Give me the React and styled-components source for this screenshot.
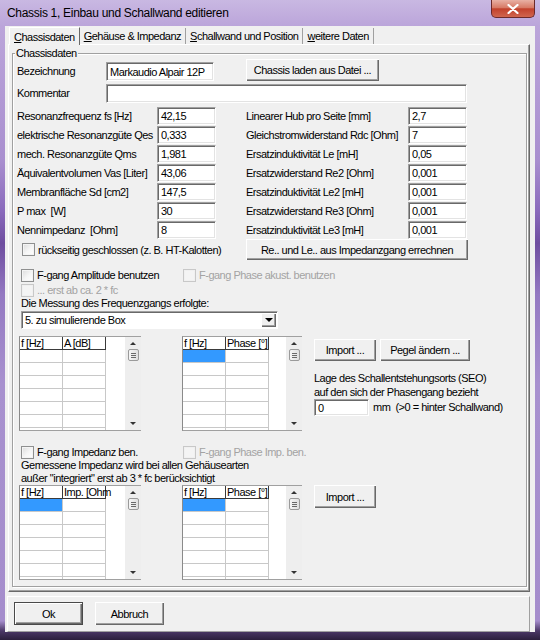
import React from 'react'
import styled, { createGlobalStyle, css } from 'styled-components'

const GlobalStyle = createGlobalStyle`
  html, body {
    margin: 0;
    padding: 0;
    background: #8f74bb;
  }
  body {
    font-family: "Liberation Sans", Arial, sans-serif;
    font-size: 11px;
    letter-spacing: -0.5px;
    color: #000;
  }
`

const Frame = styled.div`
  width: 540px;
  height: 640px;
  display: flex;
  flex-direction: column;
  box-sizing: border-box;
  padding-bottom: 8px;
  background: linear-gradient(
    180deg,
    #c9b8e2 0px,
    #bba5da 26px,
    #a98fcf 25%,
    #8a6abc 33%,
    #6f4ea0 38%,
    #9479c2 46%,
    #a891cf 60%,
    #a58dcc 97%,
    #4b3766 98.6%,
    #2b1f3c 100%
  );
`

const TitleBar = styled.div`
  height: 26px;
  display: flex;
  align-items: flex-start;
  justify-content: space-between;
  padding-left: 7px;
`

const Title = styled.span`
  font-size: 12px;
  line-height: 26px;
  letter-spacing: -0.3px;
`

const CloseButton = styled.div`
  width: 44px;
  height: 18px;
  margin-right: 5px;
  box-sizing: border-box;
  border: 1px solid #6b2a2a;
  border-top: none;
  border-radius: 0 0 5px 5px;
  background: linear-gradient(180deg, #e8b0a4 0%, #d77a66 45%, #c2412c 52%, #d0664e 100%);
  display: flex;
  align-items: center;
  justify-content: center;
`

const Client = styled.div`
  flex: 1;
  margin: 0 5px;
  background: #f0f0f0;
  display: flex;
  flex-direction: column;
`

const TabStrip = styled.div`
  height: 18px;
  display: flex;
  align-items: flex-end;
  padding-left: 4px;
`

const Tab = styled.div`
  height: 16px;
  padding: 0 4px;
  display: flex;
  align-items: center;
  border-right: 1px solid #a0a0a0;
  white-space: nowrap;
  ${p => p.$active && css`
    height: 18px;
    margin-bottom: -1px;
    position: relative;
    z-index: 1;
    background: #f0f0f0;
    border-top: 1px solid #fff;
    border-left: 1px solid #fff;
    border-right: 1px solid #696969;
    box-sizing: border-box;
  `}
`

const TabPanel = styled.div`
  height: 548px;
  margin: 0 5px 0 3px;
  box-sizing: border-box;
  padding: 8px 2px 3px 3px;
  border-top: 1px solid #fff;
  border-left: 1px solid #fff;
  border-right: 1px solid #696969;
  border-bottom: 1px solid #696969;
  box-shadow: inset -1px -1px 0 #a0a0a0;
`

const GroupBox = styled.div`
  position: relative;
  height: 534px;
  box-sizing: border-box;
  border: 1px solid #a0a0a0;
  box-shadow: inset 1px 1px 0 #fff, 1px 1px 0 #fff;
  padding-top: 5px;
`

const GroupTitle = styled.span`
  position: absolute;
  top: -7px;
  left: 2px;
  padding: 0 1px;
  background: #f0f0f0;
  line-height: 13px;
`

const Row = styled.div`
  display: flex;
  align-items: ${p => p.$align || 'center'};
  height: ${p => p.$h}px;
  margin-top: ${p => p.$top || 0}px;
  padding-left: ${p => p.$left || 0}px;
`

const Label = styled.span`
  width: ${p => p.$w}px;
  flex-shrink: 0;
  white-space: pre;
  line-height: ${p => p.$lh || 19}px;
  padding-left: ${p => p.$pl || 0}px;
`

const TextInput = styled.div`
  width: ${p => p.$w}px;
  height: ${p => p.$h}px;
  flex-shrink: 0;
  box-sizing: border-box;
  background: #fff;
  border-top: 1px solid #a0a0a0;
  border-left: 1px solid #a0a0a0;
  border-right: 1px solid #fff;
  border-bottom: 1px solid #fff;
  box-shadow: inset 1px 1px 0 #696969, inset -1px -1px 0 #e3e3e3;
  padding-left: 3px;
  display: flex;
  align-items: center;
  white-space: nowrap;
  overflow: hidden;
`

const Button = styled.div`
  width: ${p => p.$w}px;
  height: ${p => p.$h || 22}px;
  flex-shrink: 0;
  margin-left: ${p => p.$ml || 0}px;
  box-sizing: border-box;
  background: #f0f0f0;
  display: flex;
  align-items: center;
  justify-content: center;
  white-space: nowrap;
  box-shadow: inset 1px 1px 0 #fff, inset -1px -1px 0 #696969, inset -2px -2px 0 #a0a0a0;
  ${p => p.$default && css`
    border: 1px solid #4a4a4a;
  `}
`

const ParamGrid = styled.div`
  display: grid;
  grid-template-columns: 140px 59px 30px 162px 59px;
  grid-auto-rows: 19px;
  align-items: end;
  margin-top: 3px;
  padding-left: 4px;
`

const Check = styled.div`
  display: flex;
  align-items: center;
  gap: 3px;
  width: ${p => (p.$w ? `${p.$w}px` : 'auto')};
  flex-shrink: 0;
  white-space: nowrap;
  color: ${p => (p.$disabled ? '#a3a3a3' : '#000')};
`

const Box = styled.span`
  width: 13px;
  height: 13px;
  flex-shrink: 0;
  box-sizing: border-box;
  border: 1px solid ${p => (p.$disabled ? '#c8c8c8' : '#8e8f8f')};
  background: ${p => (p.$disabled ? '#f4f4f4' : 'linear-gradient(135deg, #dcdcdc 0%, #f6f6f6 55%, #fff 100%)')};
  box-shadow: inset 0 0 0 1px ${p => (p.$disabled ? '#f0f0f0' : '#f4f4f4')};
`

const TextLine = styled.div`
  line-height: ${p => p.$lh || 13}px;
  padding-left: ${p => p.$left || 0}px;
  margin-top: ${p => p.$top || 0}px;
  white-space: nowrap;
`

const Combo = styled.div`
  width: 257px;
  height: 18px;
  margin: 1px 0 0 8px;
  box-sizing: border-box;
  background: #fff;
  border-top: 1px solid #a0a0a0;
  border-left: 1px solid #a0a0a0;
  border-right: 1px solid #fff;
  border-bottom: 1px solid #fff;
  box-shadow: inset 1px 1px 0 #696969;
  display: flex;
  align-items: center;
  justify-content: space-between;
  padding: 0 1px 0 3px;
`

const DropButton = styled.div`
  width: 15px;
  height: 14px;
  box-sizing: border-box;
  background: #f0f0f0;
  box-shadow: inset 1px 1px 0 #fff, inset -1px -1px 0 #696969, inset -2px -2px 0 #a0a0a0;
  display: flex;
  align-items: center;
  justify-content: center;
`

const Arrow = styled.span`
  width: 0;
  height: 0;
  border-left: ${p => p.$s}px solid transparent;
  border-right: ${p => p.$s}px solid transparent;
  ${p => (p.$up
    ? css`border-bottom: ${p.$s}px solid ${p.$c || '#000'};`
    : css`border-top: ${p.$s}px solid ${p.$c || '#000'};`)}
`

const GridSection = styled.div`
  display: flex;
  align-items: flex-start;
  height: 95px;
  margin-top: ${p => p.$top || 0}px;
  padding-left: 6px;
`

const GridFrame = styled.div`
  width: ${p => p.$w}px;
  height: 95px;
  margin-right: ${p => p.$mr || 0}px;
  flex-shrink: 0;
  box-sizing: border-box;
  display: flex;
  border-left: 1px solid #8a8a8a;
  border-top: 1px solid #a0a0a0;
  border-bottom: 1px solid #a0a0a0;
  overflow: hidden;
`

const GridBody = styled.div`
  flex: 1;
  background: #fff;
  display: grid;
  grid-template-columns: 43px 43px;
  grid-auto-rows: 13px;
  align-content: start;
  overflow: hidden;
`

const HeadCell = styled.div`
  box-sizing: border-box;
  border-right: 1px solid #3a3a3a;
  border-bottom: 1px solid #3a3a3a;
  padding-left: 1px;
  line-height: 13px;
  white-space: nowrap;
`

const Cell = styled.div`
  box-sizing: border-box;
  border-right: 1px solid #c8c8c8;
  border-bottom: 1px solid #c8c8c8;
  background: ${p => (p.$selected ? '#3399ff' : '#fff')};
`

const ScrollBar = styled.div`
  width: 16px;
  flex-shrink: 0;
  background: #eeeeee;
  display: flex;
  flex-direction: column;
  align-items: center;
  padding: 5px 0 5px;
  box-sizing: border-box;
`

const Thumb = styled.div`
  width: 11px;
  height: 12px;
  margin-top: 4px;
  box-sizing: border-box;
  border: 1px solid #9a9a9a;
  border-radius: 2px;
  background: linear-gradient(90deg, #f6f6f6, #e0e0e0);
  display: flex;
  flex-direction: column;
  justify-content: center;
  gap: 1px;
  padding: 0 2px;
`

const Grip = styled.span`
  height: 1px;
  background: #6a6a6a;
`

const Filler = styled.div`
  flex: 1;
`

const SideColumn = styled.div`
  display: flex;
  flex-direction: column;
  padding-top: ${p => (p.$top === undefined ? 3 : p.$top)}px;
`

const ButtonRow = styled.div`
  display: flex;
`

const BottomPanel = styled.div`
  height: 36px;
  margin: 4px 5px 0 2px;
  box-sizing: border-box;
  border-top: 1px solid #fff;
  border-left: 1px solid #fff;
  border-right: 1px solid #a0a0a0;
  border-bottom: 1px solid #a0a0a0;
  display: flex;
  align-items: flex-start;
  padding: 5px 0 0 6px;
  gap: 12px;
`

const rows = 7

const DataGrid = ({ w, mr, heads, selected }) => (
  <GridFrame $w={w} $mr={mr}>
    <GridBody>
      <HeadCell>{heads[0]}</HeadCell>
      <HeadCell>{heads[1]}</HeadCell>
      {Array.from({ length: rows * 2 }).map((_, i) => (
        <Cell key={i} $selected={selected && i === 0} />
      ))}
    </GridBody>
    <ScrollBar>
      <Arrow $up $s={3} $c="#333" />
      <Thumb>
        <Grip />
        <Grip />
        <Grip />
      </Thumb>
      <Filler />
      <Arrow $s={3} $c="#333" />
    </ScrollBar>
  </GridFrame>
)

const leftParams = [
  ['Resonanzfrequenz fs [Hz]', '42,15'],
  ['elektrische Resonanzgüte Qes', '0,333'],
  ['mech. Resonanzgüte Qms', '1,981'],
  ['Äquivalentvolumen Vas [Liter]', '43,06'],
  ['Membranfläche Sd [cm2]', '147,5'],
  ['P max  [W]', '30'],
  ['Nennimpedanz  [Ohm]', '8'],
]

const rightParams = [
  ['Linearer Hub pro Seite [mm]', '2,7'],
  ['Gleichstromwiderstand Rdc [Ohm]', '7'],
  ['Ersatzinduktivität Le [mH]', '0,05'],
  ['Ersatzwiderstand Re2 [Ohm]', '0,001'],
  ['Ersatzinduktivität Le2 [mH]', '0,001'],
  ['Ersatzwiderstand Re3 [Ohm]', '0,001'],
  ['Ersatzinduktivität Le3 [mH]', '0,001'],
]

const App = () => {
  return (
    <>
      <GlobalStyle />
      <Frame>
        <TitleBar>
          <Title>Chassis 1, Einbau und Schallwand editieren</Title>
          <CloseButton>
            <svg width="12" height="10" viewBox="0 0 12 10">
              <path d="M1.5 1 L10.5 9 M10.5 1 L1.5 9" stroke="#fff" strokeWidth="2.2" strokeLinecap="round" />
            </svg>
          </CloseButton>
        </TitleBar>
        <Client>
          <TabStrip>
            <Tab $active><u>C</u>hassisdaten</Tab>
            <Tab><u>G</u>ehäuse &amp; Impedanz</Tab>
            <Tab><u>S</u>challwand und Position</Tab>
            <Tab><u>w</u>eitere Daten</Tab>
          </TabStrip>
          <TabPanel>
            <GroupBox>
              <GroupTitle>Chassisdaten</GroupTitle>

              <Row $h={22} $left={4} $align="flex-end">
                <Label $w={89}>Bezeichnung</Label>
                <TextInput $w={108} $h={19}>Markaudio Alpair 12P</TextInput>
                <Button $w={133} $ml={32}>Chassis laden aus Datei ...</Button>
              </Row>

              <Row $h={19} $top={3} $left={4}>
                <Label $w={89}>Kommentar</Label>
                <TextInput $w={361} $h={19} />
              </Row>

              <ParamGrid>
                {leftParams.map(([label, value], i) => (
                  <React.Fragment key={label}>
                    <Label $w={140} $lh={18}>{label}</Label>
                    <TextInput $w={59} $h={18}>{value}</TextInput>
                    <span />
                    <Label $w={162} $lh={18}>{rightParams[i][0]}</Label>
                    <TextInput $w={59} $h={18}>{rightParams[i][1]}</TextInput>
                  </React.Fragment>
                ))}
              </ParamGrid>

              <Row $h={21} $left={9}>
                <Check $w={224}>
                  <Box />
                  rückseitig geschlossen (z. B. HT-Kalotten)
                </Check>
                <Button $w={222} $h={21}>Re.. und Le.. aus Impedanzgang errechnen</Button>
              </Row>

              <Row $h={14} $top={8} $left={8}>
                <Check $w={162}>
                  <Box />
                  F-gang Amplitude benutzen
                </Check>
                <Check $disabled>
                  <Box $disabled />
                  F-gang Phase akust. benutzen
                </Check>
              </Row>

              <Row $h={14} $top={1} $left={8}>
                <Check $disabled>
                  <Box $disabled />
                  ... erst ab ca. 2 * fc
                </Check>
              </Row>

              <TextLine $left={8}>Die Messung des Frequenzgangs erfolgte:</TextLine>

              <Combo>
                <span>5. zu simulierende Box</span>
                <DropButton>
                  <Arrow $s={4} />
                </DropButton>
              </Combo>

              <GridSection $top={7}>
                <DataGrid w={122} mr={41} heads={['f [Hz]', 'A [dB]']} />
                <DataGrid w={120} mr={12} heads={['f [Hz]', 'Phase [°]']} selected />
                <SideColumn>
                  <ButtonRow>
                    <Button $w={62}>Import ...</Button>
                    <Button $w={90} $ml={4}>Pegel ändern ...</Button>
                  </ButtonRow>
                  <TextLine $lh={14} $top={10}>Lage des Schallentstehungsorts (SEO)</TextLine>
                  <TextLine $lh={14}>auf den sich der Phasengang bezieht</TextLine>
                  <Row $h={17}>
                    <TextInput $w={55} $h={17}>0</TextInput>
                    <Label $w={160} $lh={17} $pl={4}>mm  (&gt;0 = hinter Schallwand)</Label>
                  </Row>
                </SideColumn>
              </GridSection>

              <Row $h={14} $top={14} $left={8}>
                <Check $w={162}>
                  <Box />
                  F-gang Impedanz ben.
                </Check>
                <Check $disabled>
                  <Box $disabled />
                  F-gang Phase Imp. ben.
                </Check>
              </Row>

              <TextLine $left={8}>Gemessene Impedanz wird bei allen Gehäusearten</TextLine>
              <TextLine $left={8}>außer "integriert" erst ab 3 * fc berücksichtigt</TextLine>

              <GridSection>
                <DataGrid w={122} mr={41} heads={['f [Hz]', 'Imp. [Ohm']} selected />
                <DataGrid w={120} mr={12} heads={['f [Hz]', 'Phase [°]']} selected />
                <SideColumn $top={0}>
                  <Button $w={62} $h={23}>Import ...</Button>
                </SideColumn>
              </GridSection>
            </GroupBox>
          </TabPanel>
          <BottomPanel>
            <Button $w={69} $h={23} $default>Ok</Button>
            <Button $w={69} $h={23}>Abbruch</Button>
          </BottomPanel>
        </Client>
      </Frame>
    </>
  )
}

export default App
